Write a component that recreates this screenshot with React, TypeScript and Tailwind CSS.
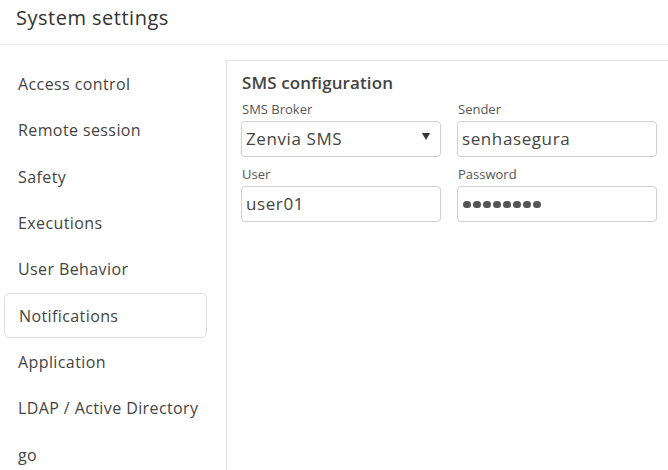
import React from "react";

const items = [
  "Access control",
  "Remote session",
  "Safety",
  "Executions",
  "User Behavior",
  "Notifications",
  "Application",
  "LDAP / Active Directory",
  "go",
];

function Field({ label, children }: { label: string; children: React.ReactNode }) {
  return (
    <div className="flex flex-col">
      <div className="text-[13px] leading-[20px] text-[#555] mb-[2px] ml-[1px]">{label}</div>
      {children}
    </div>
  );
}

export default function App() {
  return (
    <div
      className="w-[668px] h-[470px] bg-white overflow-hidden text-[#444] flex flex-col"
      style={{ fontFamily: '"Open Sans", "Noto Sans", sans-serif' }}
    >
      <div className="h-[45px] border-b border-[#ececec] flex items-center pl-4 pb-[9px] shrink-0">
        <span className="text-[20px] font-medium text-[#333] tracking-[0.5px]">System settings</span>
      </div>
      <div className="flex flex-1 pt-[15px]">
        <div className="w-[226px] shrink-0 pl-[4px] pr-[19px] pt-[1.5px] flex flex-col gap-[1.35px]">
          {items.map((it) => (
            <div
              key={it}
              className={
                "h-[45px] flex items-center pl-[14px] text-[16px] tracking-[0.4px] rounded-[5px] " +
                (it === "Notifications" ? "border border-[#dedede] pl-[13px]" : "")
              }
            >
              {it}
            </div>
          ))}
        </div>
        <div className="flex-1 border-l border-t border-[#e3e3e3] pl-[14px] pr-[11px] pt-[9px]">
          <div className="text-[17px] font-semibold text-[#444] leading-[26px] ml-[1px] tracking-[0.1px]">SMS configuration</div>
          <div className="grid grid-cols-2 gap-x-4 gap-y-[7px] mt-[3px]">
            <Field label="SMS Broker">
              <div className="h-[36px] border border-[#cfcfcf] rounded-[4px] flex items-center justify-between px-[4px] text-[17px] tracking-[0.6px] text-[#444]">
                <span>Zenvia SMS</span>
                <svg width="8" height="7" viewBox="0 0 8 7" className="mr-[6px] mb-[5px]">
                  <path d="M0 0 H8 L4 7 Z" fill="#333" />
                </svg>
              </div>
            </Field>
            <Field label="Sender">
              <div className="h-[36px] border border-[#cfcfcf] rounded-[4px] flex items-center px-[4px] text-[17px] tracking-[0.6px] text-[#444]">
                senhasegura
              </div>
            </Field>
            <Field label="User">
              <div className="h-[36px] border border-[#cfcfcf] rounded-[4px] flex items-center px-[4px] text-[17px] tracking-[0.6px] text-[#444]">
                user01
              </div>
            </Field>
            <Field label="Password">
              <div className="h-[36px] border border-[#cfcfcf] rounded-[4px] flex items-center px-[4px] text-[#555]">
                <div className="flex gap-[2.5px] ml-[1px] mt-[1px]">
                  {Array.from({ length: 8 }).map((_, i) => (
                    <span key={i} className="w-[7.5px] h-[7.5px] rounded-full bg-[#555]" />
                  ))}
                </div>
              </div>
            </Field>
          </div>
        </div>
      </div>
    </div>
  );
}
